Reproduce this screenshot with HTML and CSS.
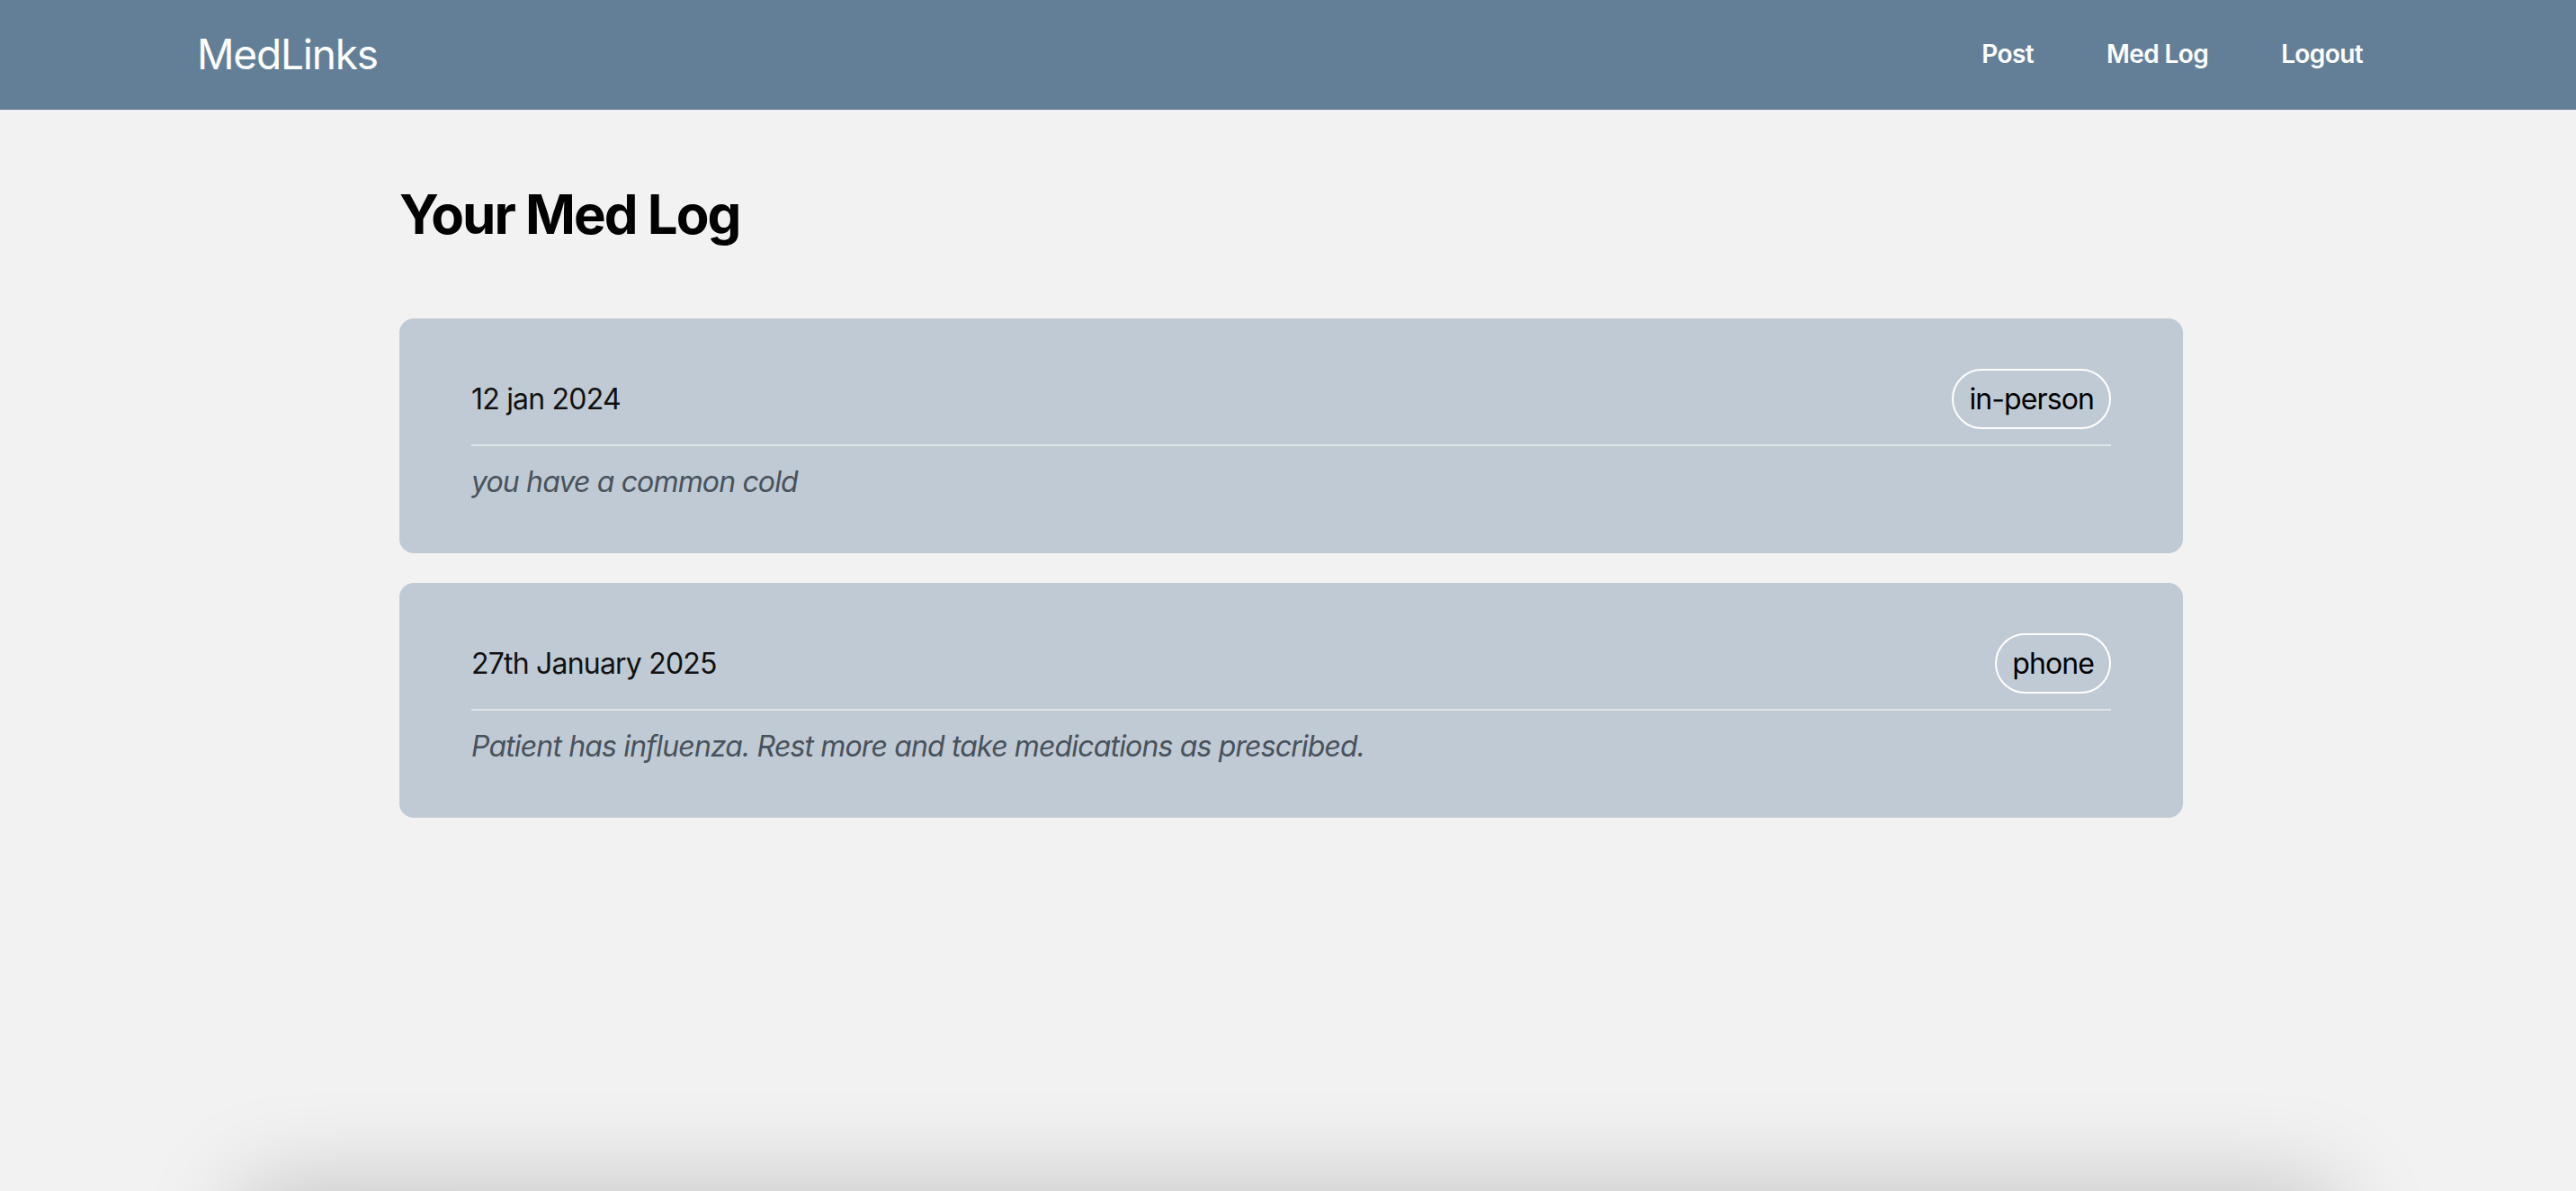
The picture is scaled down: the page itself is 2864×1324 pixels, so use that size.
FILE: index.html
```html
<!DOCTYPE html>
<html lang="en">
  <head>
    <meta charset="UTF-8" />
    <meta name="viewport" content="width=device-width, initial-scale=1.0" />
    <title>MedLinks - Med Log</title>
    <link rel="stylesheet" href="styles.css">
  </head>
  <body>
    <div class="page">
      <header class="navbar">
        <a class="brand" href="#">MedLinks</a>
        <nav class="nav-links">
          <a href="#">Post</a>
          <a href="#">Med Log</a>
          <a href="#">Logout</a>
        </nav>
      </header>

      <main class="content">
        <h1 class="page-title">Your Med Log</h1>

        <div class="log-list">
          <article class="log-card">
            <div class="log-head">
              <span class="log-date">12 jan 2024</span>
              <span class="log-type">in-person</span>
            </div>
            <p class="log-note">you have a common cold</p>
          </article>

          <article class="log-card">
            <div class="log-head">
              <span class="log-date">27th January 2025</span>
              <span class="log-type">phone</span>
            </div>
            <p class="log-note">Patient has influenza. Rest more and take medications as prescribed.</p>
          </article>
        </div>
      </main>
    </div>

    <footer class="footer"></footer>
  </body>
</html>
```

FILE: styles.css
```css
body {
  margin: 0;
  background-color: #f2f2f2;
  font-family: Inter, "Noto Sans", sans-serif;
  color: #111;
}

.page {
  min-height: 100vh;
}

.navbar {
  display: flex;
  justify-content: space-between;
  align-items: center;
  height: 120px;
  padding: 0 237px 2px 219px;
  background-color: #637f98;
}

.brand {
  color: white;
  font-size: 46px;
  font-weight: 400;
  letter-spacing: -1.2px;
  text-decoration: none;
}

.nav-links {
  display: flex;
  gap: 81px;
}

.nav-links a {
  color: white;
  font-size: 28px;
  font-weight: 600;
  letter-spacing: -0.6px;
  text-decoration: none;
}

.content {
  padding: 80px 437px 0 444px;
}

.page-title {
  margin: 0 0 80px;
  font-size: 60px;
  font-weight: 700;
  line-height: 72px;
  letter-spacing: -2px;
  color: #000;
}

.log-list {
  display: flex;
  flex-direction: column;
  gap: 33px;
}

.log-card {
  padding: 56px 80px 55px;
  background-color: #c0cad4;
  border-radius: 16px;
}

.log-head {
  display: flex;
  justify-content: space-between;
  align-items: center;
  padding-bottom: 17px;
  border-bottom: 2px solid #e0e4e9;
}

.log-date {
  font-size: 32px;
  letter-spacing: -0.8px;
  color: #111;
}

.log-type {
  padding: 12px 17px;
  border: 2px solid white;
  border-radius: 40px;
  font-size: 32px;
  line-height: 39px;
  letter-spacing: -0.9px;
  color: #000;
}

.log-note {
  margin: 16px 0 0;
  font-size: 32px;
  line-height: 48px;
  font-style: italic;
  letter-spacing: -0.85px;
  color: #48525c;
}

.footer {
  width: 2320px;
  height: 200px;
  margin: 0 auto;
  box-shadow: 0 0 110px rgba(0, 0, 0, 0.22);
}
```
